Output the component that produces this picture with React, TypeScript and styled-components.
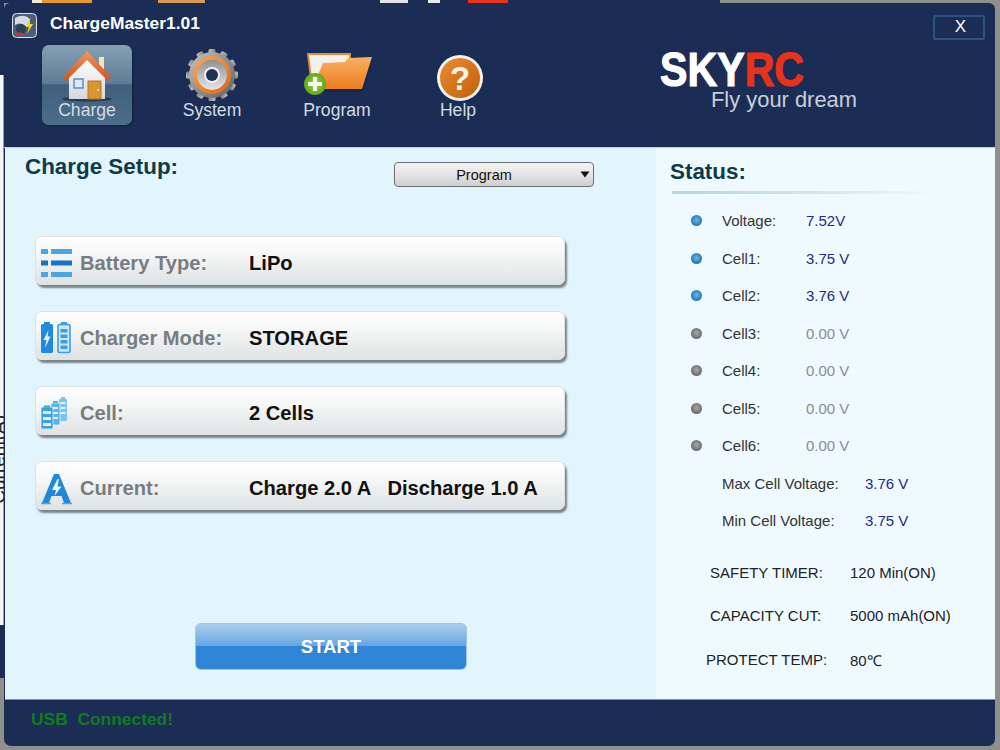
import React from 'react';
import styled, { createGlobalStyle } from 'styled-components';

const GlobalStyle = createGlobalStyle`
  html, body {
    margin: 0;
    padding: 0;
    background: #8f8f8b;
  }
  body {
    font-family: "Liberation Sans", Arial, sans-serif;
  }
`;

const Screen = styled.div`
  width: 1000px;
  height: 750px;
  overflow: hidden;
  display: flex;
  flex-direction: column;
  background: #8f8f8b;
`;

const BackdropStrip = styled.div`
  height: 3px;
  display: flex;
  flex-shrink: 0;
`;

const StripPiece = styled.div<{ $w: number; $c: string }>`
  width: ${({ $w }) => $w}px;
  background: ${({ $c }) => $c};
`;

const Desktop = styled.div`
  display: flex;
  height: 743px;
`;

const LeftEdge = styled.div`
  width: 4px;
  flex-shrink: 0;
  display: flex;
  flex-direction: column;
  overflow: hidden;
`;

const EdgeSegment = styled.div<{ $h: number; $c: string }>`
  height: ${({ $h }) => $h}px;
  background: ${({ $c }) => $c};
  flex-shrink: 0;
`;

const EdgeWhite = styled.div`
  height: 550px;
  flex-shrink: 0;
  background: #f4f6f6;
  padding-top: 340px;
  box-sizing: border-box;
  box-shadow: inset -1px 0 0 #8fa0a8;
`;

const EdgeLabel = styled.div`
  writing-mode: vertical-rl;
  transform: rotate(180deg);
  font-size: 19px;
  line-height: 20px;
  width: 20px;
  margin-left: -11px;
  color: #222;
  white-space: nowrap;
`;

const Window = styled.div`
  width: 991px;
  height: 743px;
  flex-shrink: 0;
  display: flex;
  flex-direction: column;
  background: #1b2d55;
  border-radius: 6px 6px 7px 7px;
  overflow: hidden;
  box-sizing: border-box;
`;

const Header = styled.header`
  height: 144px;
  flex-shrink: 0;
  display: flex;
  flex-direction: column;
  padding-left: 1px;
  box-sizing: border-box;
`;

const TitleBar = styled.div`
  height: 42px;
  display: flex;
  align-items: center;
  padding: 0 10px 0 7px;
`;

const AppIcon = styled.svg`
  width: 25px;
  height: 25px;
  margin-top: 3px;
  margin-right: 13px;
`;

const AppTitle = styled.h1`
  margin: -1px 0 0;
  font-size: 17.4px;
  font-weight: bold;
  color: #fff;
`;

const CloseButton = styled.button`
  margin: 6px 0 0 auto;
  width: 52px;
  height: 25px;
  padding: 0 0 0 3px;
  background: transparent;
  border: 2px solid #2b5480;
  border-radius: 2px;
  color: #fff;
  font-family: inherit;
  font-size: 17px;
`;

const Nav = styled.nav`
  display: flex;
  padding-left: 37px;
`;

const NavItem = styled.div<{ $w?: number; $active?: boolean }>`
  width: ${({ $w }) => $w ?? 90}px;
  height: 80px;
  margin-right: 35px;
  flex-shrink: 0;
  display: flex;
  flex-direction: column;
  align-items: center;
  padding-top: 3px;
  box-sizing: border-box;
  border-radius: 7px;
  background: ${({ $active }) =>
    $active ? 'linear-gradient(180deg, #86a0b2 0%, #5d7d96 48%, #3f5f7d 50%, #4d6e8a 100%)' : 'transparent'};
  box-shadow: ${({ $active }) => ($active ? '1px 1px 2px #12203d' : 'none')};
`;

const NavIcon = styled.svg`
  height: 54px;
  display: block;
  flex-shrink: 0;
`;

const NavLabel = styled.span`
  font-size: 17.6px;
  line-height: 20px;
  margin-top: -2px;
  color: #d3dbe3;
`;

const Logo = styled.div`
  margin-left: 126px;
  margin-top: 4px;
  display: flex;
  flex-direction: column;
`;

const LogoMark = styled.div`
  font-size: 49px;
  font-weight: bold;
  line-height: 40px;
  transform: scaleX(0.84);
  transform-origin: left center;
  color: #fff;
  -webkit-text-stroke: 1.2px currentColor;
`;

const LogoAccent = styled.span`
  color: #e8321a;
`;

const Tagline = styled.div`
  margin: -1px 0 0 51px;
  font-size: 21.9px;
  line-height: 24px;
  color: #c8cfd8;
  white-space: nowrap;
`;

const Content = styled.main`
  height: 552px;
  flex-shrink: 0;
  display: flex;
  border-top: 1px solid #b6d8e6;
  box-sizing: border-box;
`;

const SetupPanel = styled.section`
  width: 651px;
  flex-shrink: 0;
  margin-left: 1px;
  display: flex;
  flex-direction: column;
  background: #e2f4fc;
  box-sizing: border-box;
  padding-bottom: 29px;
`;

const SetupHead = styled.div`
  display: flex;
  height: 39px;
  padding: 6px 0 0 20px;
  box-sizing: border-box;
`;

const PanelTitle = styled.h2`
  margin: 0;
  font-size: 22.4px;
  line-height: 26px;
  font-weight: bold;
  color: #0f3a4a;
`;

const SetupTitle = styled(PanelTitle)`
  width: 369px;
`;

const SelectWrap = styled.div`
  position: relative;
  width: 200px;
  height: 25px;
  margin-top: 8px;
`;

const ProgramSelect = styled.select`
  appearance: none;
  width: 100%;
  height: 100%;
  padding: 0 20px 0 0;
  border: 1px solid #6c7072;
  border-radius: 4px;
  background: linear-gradient(180deg, #f3f3f3 0%, #e4e4e4 50%, #cfcfcf 100%);
  font-family: inherit;
  font-size: 14.5px;
  color: #111;
  text-align: center;
  text-align-last: center;
`;

const SelectArrow = styled.svg`
  position: absolute;
  right: 4px;
  top: 9px;
  width: 10px;
  height: 7px;
  pointer-events: none;
`;

const SetupRows = styled.div`
  margin: 49px 0 0 30px;
  display: flex;
  flex-direction: column;
  gap: 26px;
`;

const SetupRow = styled.div`
  width: 530px;
  height: 49px;
  display: flex;
  align-items: center;
  padding: 5px 0 0 4px;
  box-sizing: border-box;
  border: 1px solid #dde2e3;
  border-radius: 7px;
  background: linear-gradient(180deg, #ffffff 0%, #f6f7f7 35%, #dfe3e4 100%);
  box-shadow: 2px 3px 2px #78858b;
`;

const RowIcon = styled.svg`
  width: 33px;
  height: 34px;
  flex-shrink: 0;
`;

const RowLabel = styled.span`
  width: 169px;
  margin-left: 7px;
  font-size: 20.15px;
  font-weight: bold;
  color: #7a7d80;
  white-space: nowrap;
`;

const RowValue = styled.span`
  font-size: 20.15px;
  font-weight: bold;
  color: #111;
  white-space: pre;
`;

const StartButton = styled.button`
  margin: auto 0 0 190px;
  width: 272px;
  height: 47px;
  padding: 0;
  border: 1px solid #9fc6e6;
  border-radius: 6px;
  background: linear-gradient(180deg, #abcfee 0%, #66a5e2 48%, #2f86d9 50%, #2f84d6 100%);
  color: #fff;
  font-family: inherit;
  font-size: 18.5px;
  font-weight: bold;
`;

const StatusPanel = styled.aside`
  flex: 1;
  background: #eefaff;
  padding: 11px 0 0 14px;
  display: flex;
  flex-direction: column;
`;

const StatusDivider = styled.div`
  width: 263px;
  height: 3px;
  margin: 6px 0 0 2px;
  background: linear-gradient(90deg, #bcd4dc 0%, #cfe3ea 50%, rgba(238, 250, 255, 0) 100%);
`;

const ReadingList = styled.div`
  margin-top: 8px;
  display: flex;
  flex-direction: column;
`;

const Reading = styled.div<{ $labelWidth: number }>`
  height: 37.5px;
  display: grid;
  grid-template-columns: 12px ${({ $labelWidth }) => $labelWidth}px auto;
  align-items: center;
  padding-left: 20px;
  font-size: 15px;
  color: #333;
`;

const Dot = styled.span<{ $on?: boolean }>`
  width: 11px;
  height: 11px;
  margin-left: 1px;
  border-radius: 50%;
  background: ${({ $on }) =>
    $on
      ? 'radial-gradient(circle at 50% 45%, #6fb6e6 0%, #2a80bb 60%, #1a5f92 100%)'
      : 'radial-gradient(circle at 50% 45%, #a8a8a8 0%, #6f6f6f 65%, #555 100%)'};
`;

const ReadingLabel = styled.span`
  padding-left: 20px;
`;

const ReadingValue = styled.span<{ $on?: boolean }>`
  color: ${({ $on }) => ($on ? '#1f2a8c' : '#8b8e90')};
`;

const SettingList = styled.div`
  margin-top: 12px;
  display: flex;
  flex-direction: column;
`;

const Setting = styled.div<{ $h: number; $indent: number }>`
  height: ${({ $h }) => $h}px;
  display: flex;
  align-items: center;
  padding-left: ${({ $indent }) => $indent}px;
  font-size: 15px;
  color: #222;
`;

const SettingLabel = styled.span<{ $w: number }>`
  width: ${({ $w }) => $w}px;
  white-space: nowrap;
`;

const Footer = styled.footer`
  flex: 1;
  display: flex;
  align-items: center;
  padding: 0 0 7px 26px;
  border-top: 1px solid #7f93a8;
  margin-left: 1px;
`;

const UsbStatus = styled.span`
  font-size: 17.4px;
  font-weight: bold;
  color: #0f7a1e;
  white-space: pre;
`;

const HouseIcon = () => (
  <NavIcon viewBox="0 -2 52 54" width={52}>
    <defs>
      <linearGradient id="wall" x1="0" y1="0" x2="0" y2="1">
        <stop offset="0" stopColor="#ffffff" />
        <stop offset="1" stopColor="#d4d8dc" />
      </linearGradient>
      <linearGradient id="roof" x1="0" y1="0" x2="0" y2="1">
        <stop offset="0" stopColor="#f09a5a" />
        <stop offset="1" stopColor="#d4501c" />
      </linearGradient>
    </defs>
    <ellipse cx="26" cy="49" rx="25" ry="2.5" fill="#1d2c3c" opacity="0.7" />
    <rect x="38" y="7" width="5" height="13" fill="#f4e4c0" />
    <path d="M8 27 L26 9 L44 27 V49 H8 Z" fill="url(#wall)" />
    <path d="M26 1 L50 27 L47 31 L26 10 L5 31 L2 27 Z" fill="url(#roof)" />
    <rect x="13" y="29" width="9" height="9" fill="#dfe8f2" stroke="#5d8fc6" strokeWidth="1.5" />
    <rect x="27" y="31" width="13" height="18" fill="#d99532" stroke="#b9761f" strokeWidth="1" />
    <rect x="36" y="39" width="2" height="2" fill="#fbe3a8" />
  </NavIcon>
);

const gearTeeth = Array.from({ length: 12 }, (_, i) => i * 30);

const GearIcon = () => (
  <NavIcon viewBox="0 0 56 54" width={56}>
    <defs>
      <linearGradient id="steel" x1="0" y1="0" x2="1" y2="1">
        <stop offset="0" stopColor="#c5c6c6" />
        <stop offset="0.5" stopColor="#8d8f90" />
        <stop offset="1" stopColor="#5f6264" />
      </linearGradient>
      <linearGradient id="ringOrange" x1="0" y1="0" x2="1" y2="1">
        <stop offset="0" stopColor="#f6a55a" />
        <stop offset="1" stopColor="#dc6a16" />
      </linearGradient>
      <linearGradient id="silver" x1="0" y1="0" x2="0" y2="1">
        <stop offset="0" stopColor="#8e9092" />
        <stop offset="1" stopColor="#e6e6e6" />
      </linearGradient>
    </defs>
    {gearTeeth.map((deg) => (
      <rect key={deg} x="24.5" y="1" width="7" height="9" rx="1.5" fill="url(#steel)" transform={`rotate(${deg} 28 27)`} />
    ))}
    <circle cx="28" cy="27" r="23" fill="url(#steel)" />
    <circle cx="28" cy="27" r="17" fill="none" stroke="url(#ringOrange)" strokeWidth="4" />
    <circle cx="28" cy="27" r="15" fill="url(#silver)" />
    <circle cx="28" cy="27" r="8" fill="#f0f0f0" />
    <circle cx="28" cy="27" r="6" fill="#1f3156" />
  </NavIcon>
);

const FolderIcon = () => (
  <NavIcon viewBox="-1 0 72 54" width={72}>
    <defs>
      <linearGradient id="folder" x1="0" y1="0" x2="0" y2="1">
        <stop offset="0" stopColor="#f9b164" />
        <stop offset="1" stopColor="#ec7d1e" />
      </linearGradient>
      <radialGradient id="plus">
        <stop offset="0" stopColor="#9ad23a" />
        <stop offset="1" stopColor="#5ea81e" />
      </radialGradient>
    </defs>
    <path d="M6 6 H48 V14 L24 38 H10 Z" fill="#f3f1ec" stroke="#e8893a" strokeWidth="2" />
    <path d="M20 15 L42 13 L45 9 L70 9 L60 42 H10 Z" fill="#14213f" opacity="0.55" transform="translate(1 2)" />
    <path d="M21 15 L43 14 L46 10 L70 9 L60 41 H10 Z" fill="url(#folder)" />
    <circle cx="13" cy="36" r="11" fill="url(#plus)" />
    <path d="M13 29 V43 M6 36 H20" stroke="#f6f8ee" strokeWidth="4.2" />
  </NavIcon>
);

const HelpIcon = () => (
  <NavIcon viewBox="0 0 50 54" width={50}>
    <defs>
      <linearGradient id="helpFill" x1="0" y1="0" x2="1" y2="1">
        <stop offset="0" stopColor="#e88d32" />
        <stop offset="1" stopColor="#c25f08" />
      </linearGradient>
    </defs>
    <circle cx="27" cy="30" r="23" fill="#f1f1ee" />
    <circle cx="27" cy="30" r="20" fill="url(#helpFill)" />
    <text x="27" y="42" textAnchor="middle" fontFamily="Liberation Sans" fontWeight="bold" fontSize="33" fill="#f8f3e8">
      ?
    </text>
  </NavIcon>
);

const BatteryTypeIcon = () => (
  <RowIcon viewBox="0 0 33 34">
    <path d="M1 3h7v5H1zM11 3h21v5H11zM1 26h7v5H1zM11 26h21v5H11z" fill="#4aa5e4" />
    <path d="M1 14.5h7v5H1zM11 14.5h21v5H11z" fill="#1674c8" />
  </RowIcon>
);

const ChargerModeIcon = () => (
  <RowIcon viewBox="0 0 33 34">
    <rect x="1" y="3" width="12" height="29" rx="1.5" fill="#1f8ade" />
    <rect x="4" y="1" width="6" height="3" fill="#1f8ade" />
    <path d="M8.5 9 L3.5 19 H6.5 L5 27 L10.5 15.5 H7.5 Z" fill="#e6f4fc" />
    <rect x="18" y="3.5" width="12" height="28" rx="1.5" fill="#cbe8f8" stroke="#3c9fe3" strokeWidth="1.6" />
    <rect x="21" y="1" width="6" height="2.5" fill="#3c9fe3" />
    <path d="M20.5 8h7v3.5h-7zM20.5 13.5h7V17h-7zM20.5 19h7v3.5h-7zM20.5 24.5h7V28h-7z" fill="#3c9fe3" />
  </RowIcon>
);

const CellIcon = () => (
  <RowIcon viewBox="0 0 33 34">
    <rect x="19" y="3" width="8" height="22" rx="1" fill="#7cc2ee" />
    <rect x="21" y="1" width="4" height="2" fill="#7cc2ee" />
    <path d="M20.5 6h5v2h-5zM20.5 11h5v2h-5zM20.5 16h5v2h-5z" fill="#e2f4fc" />
    <rect x="11" y="7" width="9" height="22" rx="1" fill="#5ab0e8" stroke="#e2f4fc" strokeWidth="0.8" />
    <rect x="13" y="5" width="5" height="2" fill="#5ab0e8" />
    <path d="M13 11h5v2h-5zM13 16h5v2h-5zM13 21h5v2h-5z" fill="#e2f4fc" />
    <rect x="1" y="11" width="12" height="22" rx="1.5" fill="#3b9fe4" stroke="#e2f4fc" strokeWidth="0.8" />
    <rect x="4" y="9.5" width="6" height="2" fill="#3b9fe4" />
    <path d="M3 15h8v3H3zM3 21h8v3H3zM3 27h8v3H3z" fill="#dff1fb" />
  </RowIcon>
);

const CurrentIcon = () => (
  <RowIcon viewBox="0 0 33 34">
    <path d="M2 32 L14 3 H19 L31 32 H24 L21.5 25 H11.5 L9 32 Z" fill="#2087da" />
    <path d="M17.5 8 L12 19 H16 L14.5 25 L21.5 15.5 H17.5 L19 8 Z" fill="#e9f5fb" />
    <path d="M1 32.5 H11 M22 32.5 H32" stroke="#4aa5e4" strokeWidth="1.5" />
  </RowIcon>
);

const setupRows = [
  { label: 'Battery Type:', value: 'LiPo', Icon: BatteryTypeIcon },
  { label: 'Charger Mode:', value: 'STORAGE', Icon: ChargerModeIcon },
  { label: 'Cell:', value: '2 Cells', Icon: CellIcon },
  { label: 'Current:', value: 'Charge 2.0 A   Discharge 1.0 A', Icon: CurrentIcon },
];

const readings = [
  { label: 'Voltage:', value: '7.52V', on: true },
  { label: 'Cell1:', value: '3.75 V', on: true },
  { label: 'Cell2:', value: '3.76 V', on: true },
  { label: 'Cell3:', value: '0.00 V', on: false },
  { label: 'Cell4:', value: '0.00 V', on: false },
  { label: 'Cell5:', value: '0.00 V', on: false },
  { label: 'Cell6:', value: '0.00 V', on: false },
];

const App = () => (
  <Screen>
    <GlobalStyle />
    <BackdropStrip>
      <StripPiece $w={32} $c="#1b2d55" />
      <StripPiece $w={10} $c="#f3e9d8" />
      <StripPiece $w={50} $c="#e8962e" />
      <StripPiece $w={66} $c="#1b2d55" />
      <StripPiece $w={47} $c="#d69a58" />
      <StripPiece $w={175} $c="#1b2d55" />
      <StripPiece $w={28} $c="#dfe4ea" />
      <StripPiece $w={20} $c="#1b2d55" />
      <StripPiece $w={12} $c="#e6ebef" />
      <StripPiece $w={28} $c="#1b2d55" />
      <StripPiece $w={40} $c="#e8321a" />
      <StripPiece $w={212} $c="#1b2d55" />
      <StripPiece $w={280} $c="#8f8f8b" />
    </BackdropStrip>
    <Desktop>
      <LeftEdge>
        <EdgeSegment $h={72} $c="#1b2d55" />
        <EdgeWhite>
          <EdgeLabel>Current(A)</EdgeLabel>
        </EdgeWhite>
        <EdgeSegment $h={53} $c="#1b2d55" />
        <EdgeSegment $h={68} $c="#8f8f8b" />
      </LeftEdge>
      <Window>
        <Header>
          <TitleBar>
            <AppIcon viewBox="0 0 25 25">
              <rect x="0.5" y="0.5" width="24" height="24" rx="4" fill="#4d5f78" stroke="#dfe4ea" />
              <path d="M3 5 Q12 0 18 6 L15 14 Q8 8 3 12 Z" fill="#d5dbe0" />
              <circle cx="9" cy="16" r="5" fill="#2d3f5e" />
              <path d="M18 5 L14 14 H17 L15 21 L21 11 H18 Z" fill="#f2d22e" />
              <path d="M3 21 Q8 17 13 22 L4 23 Z" fill="#c43a2a" />
            </AppIcon>
            <AppTitle>ChargeMaster1.01</AppTitle>
            <CloseButton>X</CloseButton>
          </TitleBar>
          <Nav>
            <NavItem $active>
              <HouseIcon />
              <NavLabel>Charge</NavLabel>
            </NavItem>
            <NavItem>
              <GearIcon />
              <NavLabel>System</NavLabel>
            </NavItem>
            <NavItem>
              <FolderIcon />
              <NavLabel>Program</NavLabel>
            </NavItem>
            <NavItem $w={82}>
              <HelpIcon />
              <NavLabel>Help</NavLabel>
            </NavItem>
            <Logo>
              <LogoMark>
                SKY<LogoAccent>RC</LogoAccent>
              </LogoMark>
              <Tagline>Fly your dream</Tagline>
            </Logo>
          </Nav>
        </Header>
        <Content>
          <SetupPanel>
            <SetupHead>
              <SetupTitle>Charge Setup:</SetupTitle>
              <SelectWrap>
                <ProgramSelect defaultValue="Program" aria-label="Program">
                  <option>Program</option>
                </ProgramSelect>
                <SelectArrow viewBox="0 0 10 7">
                  <path d="M0.5 0.5 H9.5 L5 6.5 Z" fill="#111" />
                </SelectArrow>
              </SelectWrap>
            </SetupHead>
            <SetupRows>
              {setupRows.map(({ label, value, Icon }) => (
                <SetupRow key={label}>
                  <Icon />
                  <RowLabel>{label}</RowLabel>
                  <RowValue>{value}</RowValue>
                </SetupRow>
              ))}
            </SetupRows>
            <StartButton>START</StartButton>
          </SetupPanel>
          <StatusPanel>
            <PanelTitle>Status:</PanelTitle>
            <StatusDivider />
            <ReadingList>
              {readings.map(({ label, value, on }) => (
                <Reading key={label} $labelWidth={104}>
                  <Dot $on={on} />
                  <ReadingLabel>{label}</ReadingLabel>
                  <ReadingValue $on={on}>{value}</ReadingValue>
                </Reading>
              ))}
              <Reading $labelWidth={163}>
                <span />
                <ReadingLabel>Max Cell Voltage:</ReadingLabel>
                <ReadingValue $on>3.76 V</ReadingValue>
              </Reading>
              <Reading $labelWidth={163}>
                <span />
                <ReadingLabel>Min Cell Voltage:</ReadingLabel>
                <ReadingValue $on>3.75 V</ReadingValue>
              </Reading>
            </ReadingList>
            <SettingList>
              <Setting $h={42} $indent={40}>
                <SettingLabel $w={140}>SAFETY TIMER:</SettingLabel>
                120 Min(ON)
              </Setting>
              <Setting $h={43} $indent={40}>
                <SettingLabel $w={140}>CAPACITY CUT:</SettingLabel>
                5000 mAh(ON)
              </Setting>
              <Setting $h={46} $indent={36}>
                <SettingLabel $w={144}>PROTECT TEMP:</SettingLabel>
                80℃
              </Setting>
            </SettingList>
          </StatusPanel>
        </Content>
        <Footer>
          <UsbStatus>USB  Connected!</UsbStatus>
        </Footer>
      </Window>
    </Desktop>
  </Screen>
);

export default App;
